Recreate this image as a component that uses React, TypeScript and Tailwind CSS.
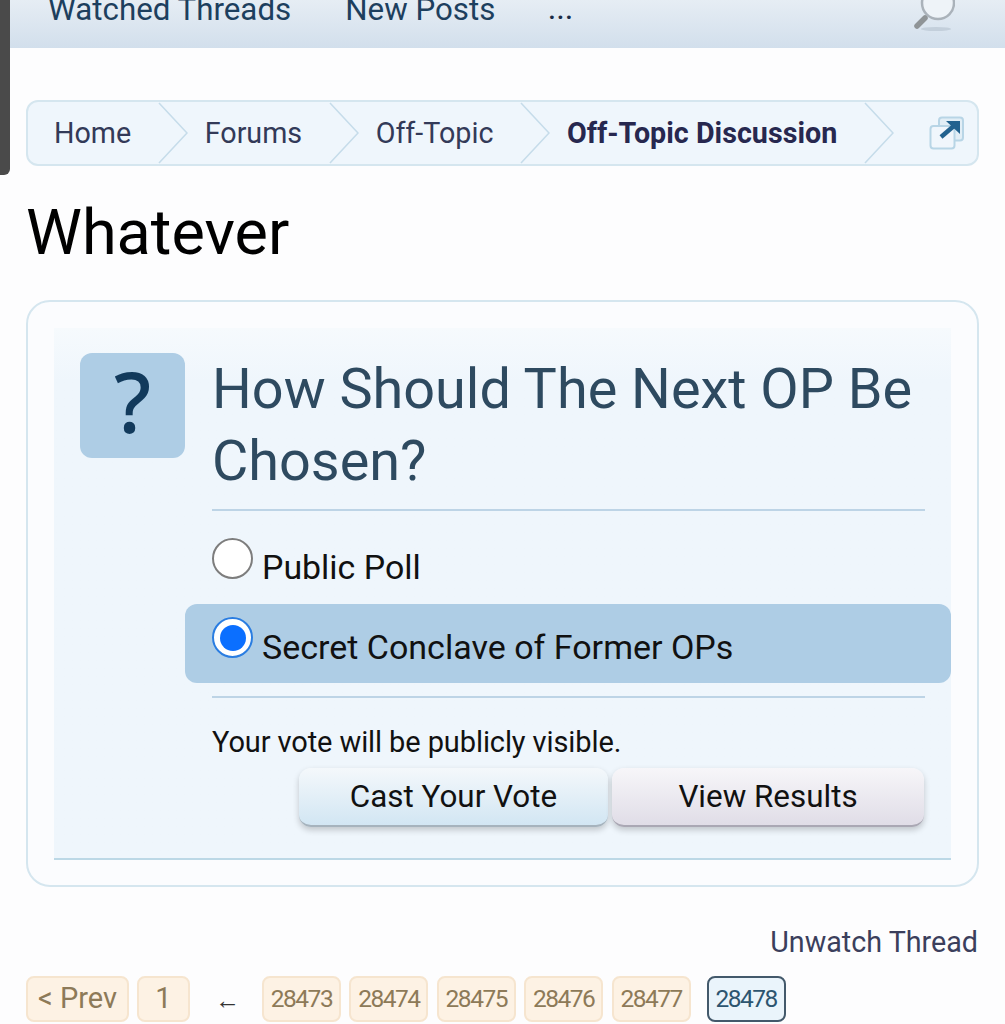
const font = { fontFamily: "Roboto, sans-serif" };

function Chevron() {
  return (
    <svg width="30" height="62" viewBox="0 0 30 62" className="shrink-0" aria-hidden="true">
      <path d="M1 1 L29 31 L1 61" fill="none" stroke="#c6dcea" strokeWidth="1.6" />
    </svg>
  );
}

function Crumb({ children, bold }: { children: string; bold?: boolean }) {
  return (
    <>
      <span className={bold ? "pt-[2px] text-[28.7px] font-bold text-[#27284f] whitespace-nowrap" : "pt-[2px] text-[28.7px] text-[#333a58] whitespace-nowrap"}>
        {children}
      </span>
      <span className="ml-[27px] mr-[16.5px] flex">
        <Chevron />
      </span>
    </>
  );
}

function Page({ label, wide }: { label: string; wide?: boolean }) {
  return (
    <span
      className={
        wide
          ? "h-[46px] w-[79px] flex items-center justify-center rounded-[8px] border-2 border-[#f6e5cf] bg-[#fdf2e4] text-[24.5px] tracking-[-1.5px] text-[#8d7a58]"
          : "h-[46px] flex items-center justify-center rounded-[8px] border-2 border-[#f6e5cf] bg-[#fdf2e4] text-[29px] text-[#8d7a58]"
      }
    >
      {label}
    </span>
  );
}

export default function App() {
  return (
    <div style={font} className="relative h-[1024px] w-[1005px] overflow-hidden bg-[#fdfdfe]">
      <div className="absolute left-0 top-0 h-[175px] w-[10px] rounded-br-[6px] bg-[#4a4a4a]" />

      <div className="flex h-[48px] items-end overflow-hidden bg-gradient-to-b from-[#e6edf4] to-[#d2dfec] pb-[21px] pl-[48px] pr-[50px]">
        <span className="text-[31.3px] leading-[34px] text-[#1d3f5e] whitespace-nowrap">Watched Threads</span>
        <span className="ml-[54px] text-[31.3px] leading-[34px] text-[#1d3f5e] whitespace-nowrap">New Posts</span>
        <span className="ml-[53px] text-[27px] font-medium tracking-[1px] leading-[34px] text-[#1a2b45]">...</span>
        <svg width="44" height="34" viewBox="0 0 44 34" className="ml-auto -mb-[7px] shrink-0" aria-hidden="true">
          <ellipse cx="25" cy="29" rx="15" ry="2" fill="#c3cfdb" />
          <circle cx="27" cy="3" r="16" fill="#eef3f8" stroke="#aab2ba" strokeWidth="2.5" />
          <path d="M14 18 L6 26" stroke="#8f9497" strokeWidth="5.5" strokeLinecap="round" />
        </svg>
      </div>

      <div className="mx-[26px] mt-[52px] flex h-[66px] items-center rounded-[12px] border-2 border-[#d5e6ef] bg-[#eff6fc] pl-[26px]">
        <Crumb>Home</Crumb>
        <Crumb>Forums</Crumb>
        <Crumb>Off-Topic</Crumb>
        <Crumb bold>Off-Topic Discussion</Crumb>
        <svg width="36" height="34" viewBox="0 0 36 34" className="ml-[18px] shrink-0" aria-hidden="true">
          <rect x="10" y="1.5" width="24" height="23" rx="3" fill="#e2eef6" stroke="#b8d5e6" strokeWidth="2" />
          <rect x="1.5" y="10" width="24" height="22.5" rx="3" fill="#f0f6fc" stroke="#b8d5e6" strokeWidth="2" />
          <path d="M12 21 L26 9" stroke="#22628f" strokeWidth="4.5" />
          <path d="M17 5 H31 V18 Z" fill="#22628f" />
        </svg>
      </div>

      <h1 className="ml-[26px] mt-[28px] text-[63px] leading-[78px] font-normal text-black">Whatever</h1>

      <div className="mx-[26px] mt-[28px] h-[587px] rounded-[24px] border-2 border-[#d5e6ef] bg-[#fbfcfe] px-[26px] pt-[26px]">
        <div className="h-[532px] border-b-2 border-[#bcd8e6] bg-gradient-to-b from-[#f6fafd] to-[#eff6fc] to-[10%] pl-[26px] pt-[25px]">
          <div className="flex">
            <div
              style={{ fontFamily: '"Noto Sans", sans-serif' }}
              className="flex h-[105px] w-[105px] shrink-0 items-center justify-center rounded-[12px] bg-[#aecde5] pb-[10px] text-[83px] font-medium leading-none text-[#123a5c]"
            >
              ?
            </div>
            <div className="ml-[27px] mr-[26px] flex-1">
              <h2 className="border-b-2 border-[#bdd4e6] pb-[12px] text-[55.8px] leading-[72px] font-normal text-[#2e4a60]">
                How Should The Next OP Be Chosen?
              </h2>
              <div className="mt-[27px] flex h-[67px] items-start">
                <span className="h-[41px] w-[41px] shrink-0 rounded-full border-2 border-[#7d7d7d] bg-white" />
                <span className="ml-[9px] mt-[11px] text-[33.9px] leading-[38px] text-[#111]">Public Poll</span>
              </div>
            </div>
          </div>
          <div className="-mt-[1px] ml-[105px] flex h-[79px] items-start rounded-[12px] bg-[#aecde5] pl-[27px] pt-[13px]">
            <span className="flex h-[41px] w-[41px] shrink-0 items-center justify-center rounded-full border-2 border-[#2a7de1] bg-white">
              <span className="h-[26px] w-[26px] rounded-full bg-[#0b6fff]" />
            </span>
            <span className="ml-[9px] mt-[11px] text-[34px] leading-[38px] text-[#111] whitespace-nowrap">Secret Conclave of Former OPs</span>
          </div>
          <div className="ml-[132px] mr-[26px] mt-[13px] border-t-2 border-[#bdd4e6] pt-[27px] text-[29px] tracking-[-0.1px] leading-[34px] text-[#111] whitespace-nowrap">
            Your vote will be publicly visible.
          </div>
          <div className="mr-[27px] mt-[9px] flex justify-end gap-[4px]">
            <button className="h-[59px] w-[309px] rounded-[12px] border-b-2 border-[#a6b3bd] bg-gradient-to-b from-[#f4f8fb] to-[#d2e6f3] text-[31.4px] text-[#111] shadow-[0_3px_6px_rgba(0,0,0,0.2)]">
              Cast Your Vote
            </button>
            <button className="h-[59px] w-[312px] rounded-[12px] border-b-2 border-[#aaa8b4] bg-gradient-to-b from-[#f7f6f9] to-[#e0dde7] text-[31.4px] text-[#111] shadow-[0_3px_6px_rgba(0,0,0,0.2)]">
              View Results
            </button>
          </div>
        </div>
      </div>

      <div className="mr-[27px] mt-[39px] text-right text-[28.7px] leading-[33px] text-[#3b3f5c]">Unwatch Thread</div>

      <div className="ml-[26px] mt-[17px] flex items-center">
        <span className="w-[103px]"><Page label="< Prev" /></span>
        <span className="ml-[8px] w-[53px]"><Page label="1" /></span>
        <span className="ml-[25px] w-[47px] pt-[4px] text-[25px] text-[#333]">←</span>
        <span className="flex gap-[8.4px]">
          <Page wide label="28473" />
          <Page wide label="28474" />
          <Page wide label="28475" />
          <Page wide label="28476" />
          <Page wide label="28477" />
        </span>
        <span className="ml-[16px] flex h-[46px] w-[79px] items-center justify-center rounded-[8px] border-2 border-[#43596b] bg-[#eaf4fb] text-[24.5px] tracking-[-1.5px] text-[#2d5570]">
          28478
        </span>
      </div>
    </div>
  );
}
